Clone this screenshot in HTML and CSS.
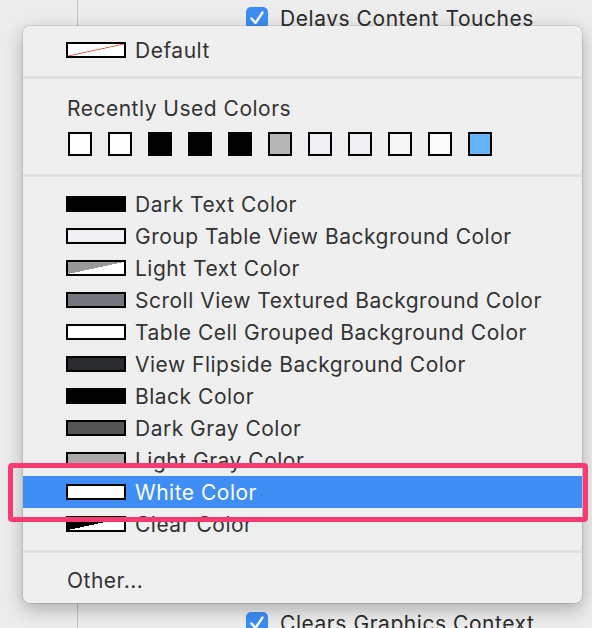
FILE: index.html
```html
<!DOCTYPE html>
<html>
<head>
<meta charset="utf-8">
<link rel="stylesheet" href="styles.css">
</head>
<body>
<div class="window">
  <div class="sidebar"></div>
  <div class="inspector">
    <div class="check-row">
      <span class="checkbox"><svg viewBox="0 0 22 22" width="22" height="22"><path d="M5.5 11.5 L9.5 16 L16.5 5.5" fill="none" stroke="#fff" stroke-width="2.4" stroke-linecap="round" stroke-linejoin="round"/></svg></span>
      <span class="check-label">Delays Content Touches</span>
    </div>
    <div class="check-row">
      <span class="checkbox"><svg viewBox="0 0 22 22" width="22" height="22"><path d="M5.5 11.5 L9.5 16 L16.5 5.5" fill="none" stroke="#fff" stroke-width="2.4" stroke-linecap="round" stroke-linejoin="round"/></svg></span>
      <span class="check-label">Clears Graphics Context</span>
    </div>
  </div>
</div>

<div class="menu">
  <div class="item first"><span class="swatch sw-default"></span><span>Default</span></div>
  <div class="sep sep-1"></div>
  <div class="item header">Recently Used Colors</div>
  <div class="recent">
    <span class="sq c-white"></span>
    <span class="sq c-white"></span>
    <span class="sq c-black"></span>
    <span class="sq c-black"></span>
    <span class="sq c-black"></span>
    <span class="sq c-b5"></span>
    <span class="sq c-ef"></span>
    <span class="sq c-ef"></span>
    <span class="sq c-f7"></span>
    <span class="sq c-fa"></span>
    <span class="sq c-blue"></span>
  </div>
  <div class="sep sep-2"></div>
  <div class="list">
    <div class="item"><span class="swatch c-black"></span><span>Dark Text Color</span></div>
    <div class="item"><span class="swatch c-ef"></span><span>Group Table View Background Color</span></div>
    <div class="item"><span class="swatch sw-light"></span><span>Light Text Color</span></div>
    <div class="item"><span class="swatch c-scroll"></span><span>Scroll View Textured Background Color</span></div>
    <div class="item"><span class="swatch c-white"></span><span>Table Cell Grouped Background Color</span></div>
    <div class="item"><span class="swatch c-flip"></span><span>View Flipside Background Color</span></div>
    <div class="item"><span class="swatch c-black"></span><span>Black Color</span></div>
    <div class="item"><span class="swatch c-dgray"></span><span>Dark Gray Color</span></div>
    <div class="item"><span class="swatch c-lgray"></span><span>Light Gray Color</span></div>
    <div class="item selected"><span class="swatch c-white"></span><span>White Color</span></div>
    <div class="item"><span class="swatch sw-clear"></span><span>Clear Color</span></div>
  </div>
  <div class="sep sep-3"></div>
  <div class="item other">Other...</div>
</div>

<div class="callout"></div>
</body>
</html>
```

FILE: styles.css
```css
* { box-sizing: border-box; }

html, body {
  margin: 0;
  padding: 0;
}

body {
  width: 592px;
  height: 628px;
  overflow: hidden;
  background: #ececec;
  font-family: Inter, "Liberation Sans", sans-serif;
  color: #333333;
  position: relative;
}

.window {
  display: flex;
  height: 628px;
}

.sidebar {
  width: 78px;
  border-right: 1px solid #c3c3c3;
  background: #ececec;
}

.inspector {
  flex: 1;
  display: flex;
  flex-direction: column;
  justify-content: space-between;
  padding: 7px 0 0 168px;
  height: 634px;
}

.check-row {
  display: flex;
  align-items: center;
  gap: 12px;
  height: 22px;
}

.checkbox {
  width: 22px;
  height: 22px;
  border-radius: 5px;
  background: #3b8df5;
  display: block;
}

.checkbox svg { display: block; }

.check-label {
  font-size: 21px;
  letter-spacing: 0.55px;
  color: #2b2b2b;
}

.menu {
  position: absolute;
  left: 23px;
  top: 26px;
  width: 559px;
  height: 577px;
  background: #efefef;
  border-radius: 7px;
  box-shadow: 0 0 0 1px rgba(0,0,0,0.08), 0 6px 18px rgba(0,0,0,0.28);
  padding-top: 8px;
  display: flex;
  flex-direction: column;
}

.item {
  height: 32px;
  display: flex;
  align-items: center;
  padding-left: 43px;
  font-size: 21px;
  letter-spacing: 0.5px;
  color: #333333;
  white-space: nowrap;
}

.swatch {
  width: 60px;
  height: 16px;
  border: 2px solid #000;
  margin-right: 9px;
  flex: none;
}

.header { padding-left: 44px; }

.sep {
  height: 3px;
  background: #e1e1e1;
  flex: none;
}

.sep-1 { margin: 10px 0 13px; }
.sep-2 { margin: 18px 0 11px; }
.sep-3 { margin: 10px 0 11px; }

.recent {
  display: flex;
  gap: 16px;
  padding-left: 45px;
  margin-top: 8px;
}

.sq {
  width: 24px;
  height: 24px;
  border: 2px solid #000;
  flex: none;
}

.list {
  display: flex;
  flex-direction: column;
}

.selected {
  background: #3e8ef5;
  color: #ffffff;
}

.other { padding-left: 44px; }

.c-white { background: #ffffff; }
.c-black { background: #000000; }
.c-b5 { background: #b5b5b5; }
.c-ef { background: #efeff4; }
.c-f7 { background: #f6f6f6; }
.c-fa { background: #fbfbfb; }
.c-blue { background: #63b5f8; }
.c-scroll { background: #75777e; }
.c-flip { background: #2a2c30; }
.c-dgray { background: #555555; }
.c-lgray { background: #aaaaaa; }

.sw-default {
  background: linear-gradient(to top left, #ffffff calc(50% - 0.8px), #e0403a 50%, #ffffff calc(50% + 0.8px));
}

.sw-light {
  background: linear-gradient(to bottom right, #999999 50%, #ffffff 50%);
}

.sw-clear {
  background: linear-gradient(to bottom right, #000000 50%, #ffffff 50%);
}

.callout {
  position: absolute;
  left: 8px;
  top: 463px;
  width: 580px;
  height: 59px;
  border: 5px solid #f83a72;
  border-radius: 4px;
}
```
